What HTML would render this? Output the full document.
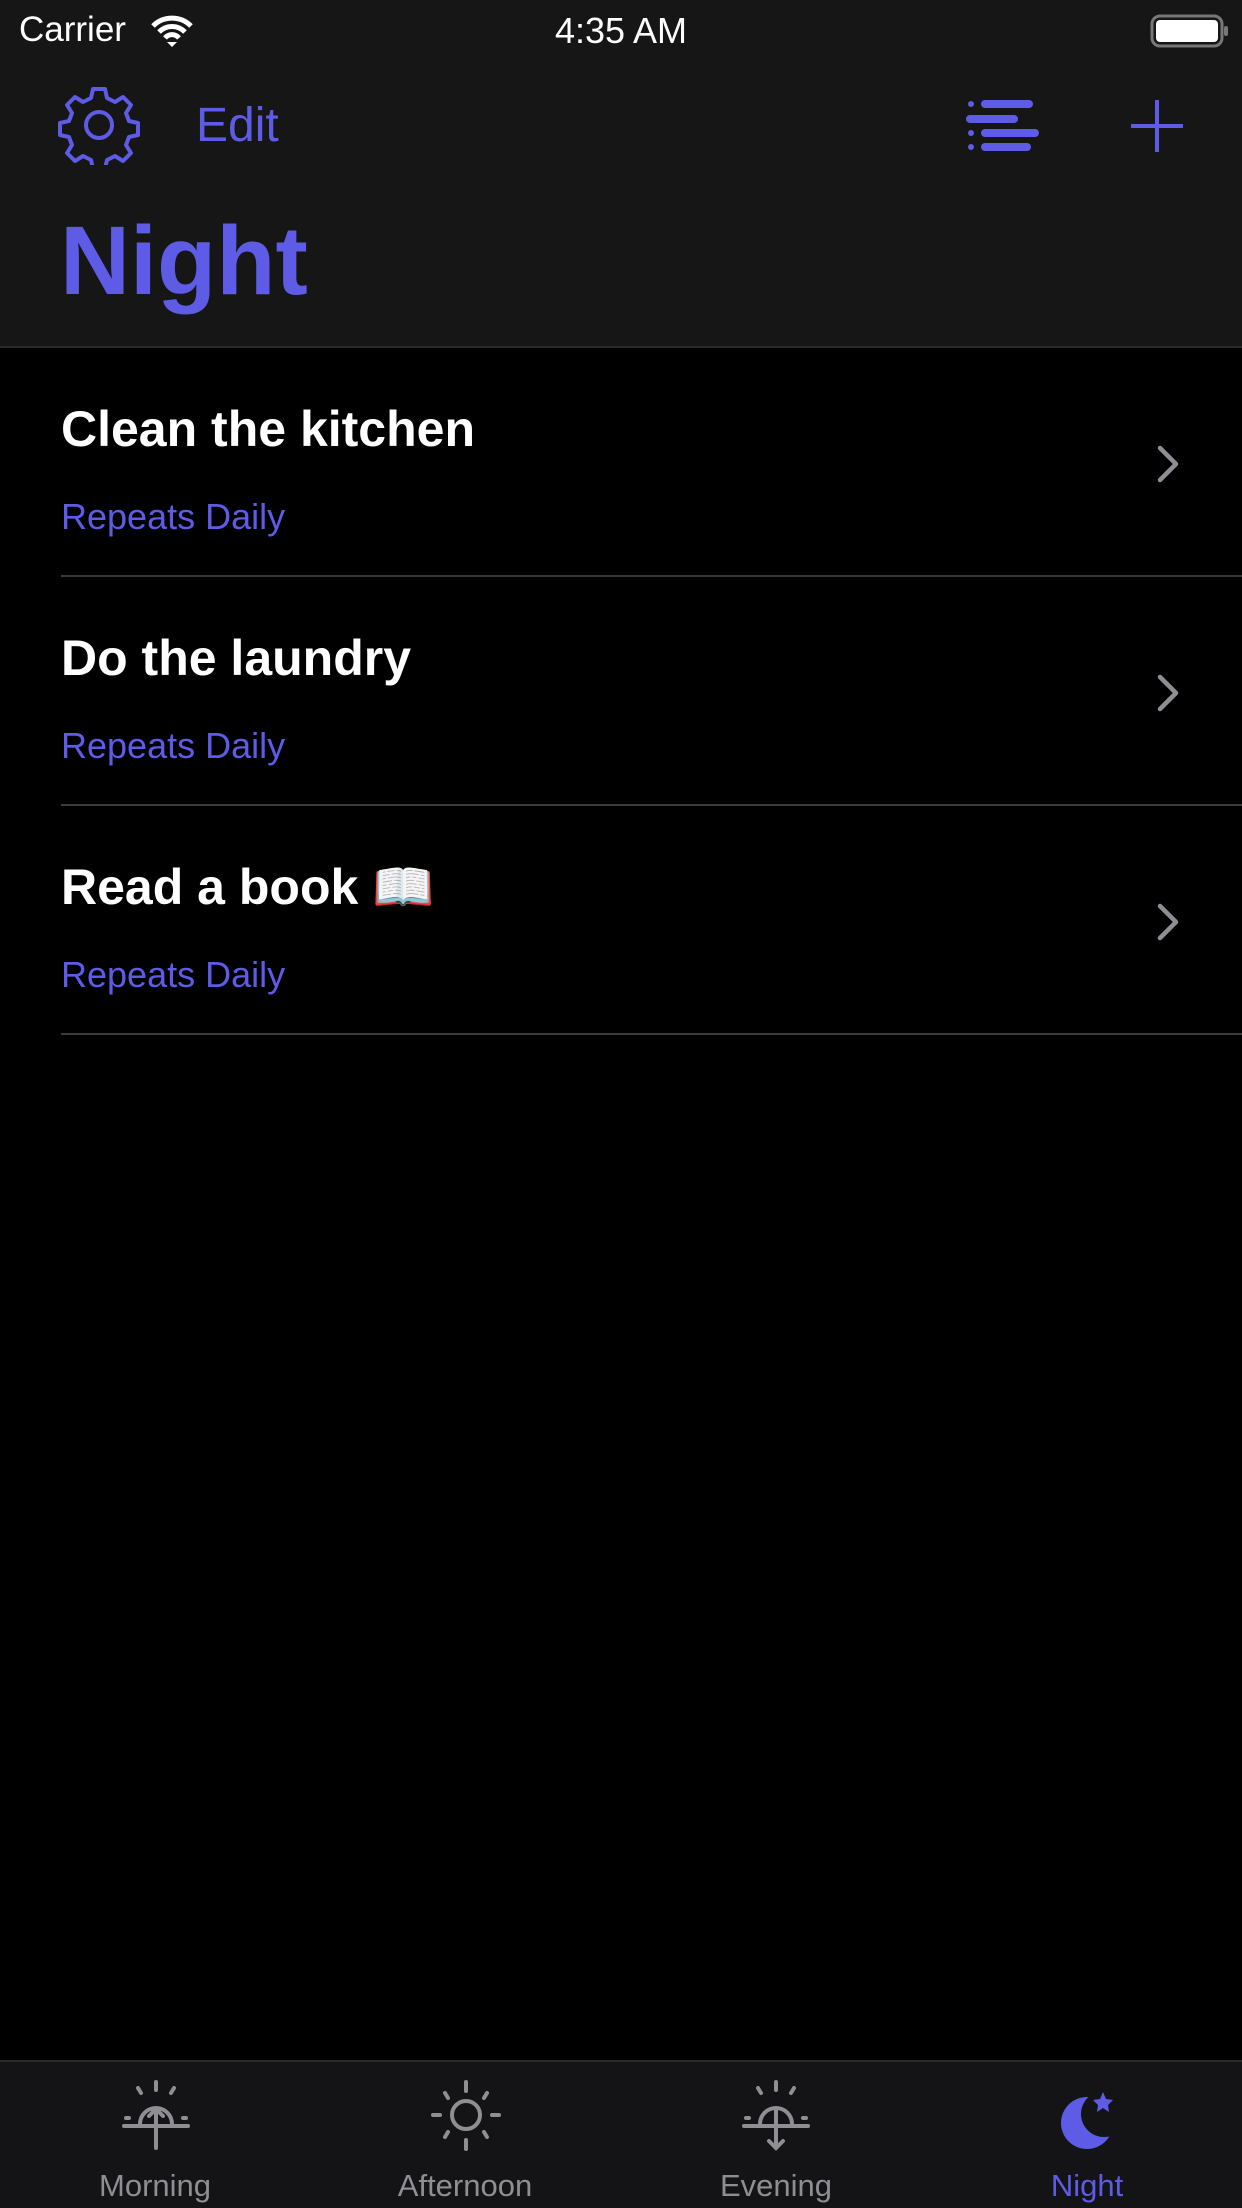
<!DOCTYPE html>
<html><head><meta charset="utf-8"><style>
*{margin:0;padding:0;box-sizing:border-box}
body{width:1242px;height:2208px;background:#000;font-family:"Liberation Sans",sans-serif;position:relative;overflow:hidden;color:#fff}
.hdr{position:absolute;left:0;top:0;width:1242px;height:348px;background:#161616;border-bottom:2px solid #2a2a2a}
.abs{position:absolute}
.purple{color:#5e5ce6}
.title{font-size:50px;font-weight:bold;left:61px}
.sub{font-size:36px;left:61px;color:#5e5ce6}
.sep{position:absolute;left:61px;right:0;height:2px;background:#3a3a3c}
.tab{position:absolute;top:2060px;left:0;width:1242px;height:148px;background:#141416;border-top:2px solid #2a2a2a}
.lbl{position:absolute;top:2168px;font-size:31px;color:#8e8e93;width:300px;text-align:center}
</style></head><body>
<div class="hdr"></div>
<div class="abs" style="left:19px;top:10px;font-size:35px">Carrier</div>
<svg class="abs" style="left:150px;top:14px" width="44" height="34" viewBox="0 0 44 34"><path d="M3 12a27 27 0 0 1 38 0M9 18a18 18 0 0 1 26 0M15 24a9 9 0 0 1 14 0" stroke="#fff" stroke-width="5" fill="none"/><path d="M22 33l-5-5h10z" fill="#fff"/></svg>
<div class="abs" style="left:0;width:1242px;text-align:center;top:10px;font-size:36px">4:35 AM</div>
<svg class="abs" style="left:1150px;top:14px" width="80" height="36"><rect x="2" y="2" width="70" height="30" rx="8" fill="none" stroke="#777" stroke-width="3"/><rect x="6" y="6" width="62" height="22" rx="4" fill="#fff"/><rect x="74" y="12" width="4" height="10" rx="2" fill="#777"/></svg>
<svg class="abs" style="left:58px;top:85px" width="82" height="80" viewBox="-41 -40 82 80"><path d="M-6 -36h12l2 9 8 4 8-5 8 8-5 8 3 8 9 2v12l-9 2-3 8 5 8-8 8-8-5-8 4-2 9h-12l-2-9-8-4-8 5-8-8 5-8-3-8-9-2v-12l9-2 3-8-5-8 8-8 8 5 8-4z" fill="none" stroke="#5e5ce6" stroke-width="4" stroke-linejoin="round"/><circle r="13" fill="none" stroke="#5e5ce6" stroke-width="4"/></svg>
<div class="abs purple" style="left:196px;top:98px;font-size:48px">Edit</div>
<svg class="abs" style="left:966px;top:98px" width="74" height="54"><g fill="#5e5ce6"><rect x="15" y="2" width="52" height="8" rx="4"/><rect x="0" y="17" width="52" height="8" rx="4"/><rect x="15" y="31" width="58" height="8" rx="4"/><rect x="15" y="45" width="50" height="8" rx="4"/><circle cx="5" cy="6" r="3"/><circle cx="5" cy="35" r="3"/><circle cx="5" cy="49" r="3"/></g></svg>
<svg class="abs" style="left:1129px;top:98px" width="56" height="56"><path d="M28 2v52M2 28h52" stroke="#5e5ce6" stroke-width="4"/></svg>
<div class="abs purple" style="left:60px;top:212px;font-size:97px;font-weight:bold;line-height:1">Night</div>

<div class="abs title" style="top:400px">Clean the kitchen</div>
<div class="abs sub" style="top:496px">Repeats Daily</div>
<div class="sep" style="top:575px"></div>
<div class="abs title" style="top:629px">Do the laundry</div>
<div class="abs sub" style="top:725px">Repeats Daily</div>
<div class="sep" style="top:804px"></div>
<div class="abs title" style="top:858px">Read a book 📖</div>
<div class="abs sub" style="top:954px">Repeats Daily</div>
<div class="sep" style="top:1033px"></div>
<svg class="abs" style="left:1152px;top:442px" width="32" height="600"><g fill="none" stroke="#8e8e93" stroke-width="4.5" stroke-linecap="round" stroke-linejoin="round"><path d="M8 6l16 16-16 16"/><path d="M8 235l16 16-16 16"/><path d="M8 464l16 16-16 16"/></g></svg>

<div class="tab"></div>
<svg class="abs" style="left:118px;top:2080px" width="76" height="72" viewBox="0 0 76 72"><g stroke="#8e8e93" stroke-width="4" fill="none" stroke-linecap="round"><path d="M38 2v8M20 8l3 5M56 8l-3 5M8 38h3M68 38h-3M6 46h64M38 68V30"/><path d="M22 44a16 16 0 0 1 32 0"/><path d="M31 36l7-7 7 7"/></g></svg>
<svg class="abs" style="left:428px;top:2080px" width="76" height="72" viewBox="0 0 76 72"><g stroke="#8e8e93" stroke-width="4" fill="none" stroke-linecap="round"><circle cx="38" cy="35" r="14"/><path d="M38 2v9M38 60v9M5 35h7M64 35h7M17 13l3 5M59 13l-3 5M17 57l3-5M59 57l-3-5"/></g></svg>
<svg class="abs" style="left:738px;top:2080px" width="76" height="72" viewBox="0 0 76 72"><g stroke="#8e8e93" stroke-width="4" fill="none" stroke-linecap="round"><path d="M38 2v8M20 8l3 5M56 8l-3 5M8 38h3M68 38h-3M6 46h64M38 30v38"/><path d="M22 44a16 16 0 0 1 32 0"/><path d="M31 61l7 7 7-7"/></g></svg>
<svg class="abs" style="left:1058px;top:2090px" width="62" height="62" viewBox="0 0 62 62"><circle cx="29" cy="33" r="26" fill="#5e5ce6"/><circle cx="46" cy="24" r="23" fill="#141416"/><path d="M45 2l3 7 7 1-5 5 1 7-6-4-6 4 1-7-5-5 7-1z" fill="#5e5ce6"/></svg>
<div class="lbl" style="left:5px">Morning</div>
<div class="lbl" style="left:315px">Afternoon</div>
<div class="lbl" style="left:626px">Evening</div>
<div class="lbl" style="left:937px;color:#5e5ce6">Night</div>
</body></html>
